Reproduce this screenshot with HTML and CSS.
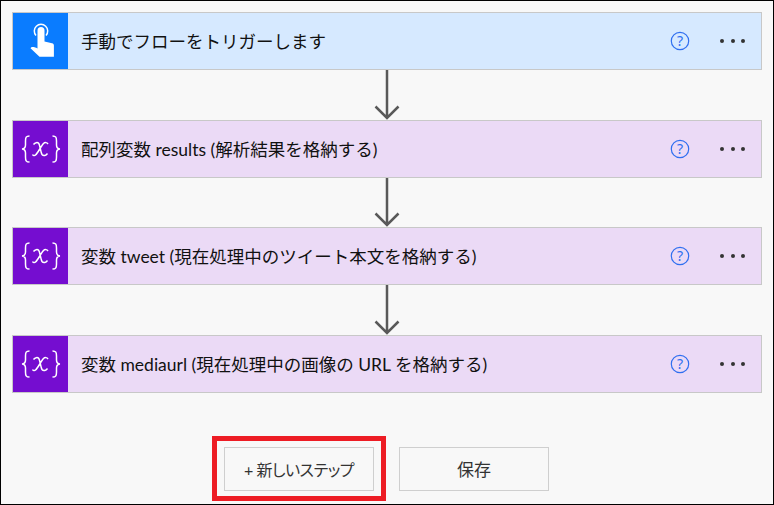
FILE: index.html
```html
<!DOCTYPE html>
<html lang="ja">
<head>
<meta charset="utf-8">
<title>フロー</title>
<link rel="stylesheet" href="styles.css">
</head>
<body>
<main class="frame">
  <section class="card card-trigger">
    <div class="tile tile-trigger">
      <svg width="28" height="36" viewBox="26.500 23 28 36"><path d="M35.500 35.500a6.700 6.700 0 1 1 10 0" fill="none" stroke="#fff" stroke-width="1.500"/><path d="M37 30.500a3.500 3.500 0 0 1 7 0V41.500L51.500 43.200c1.300.3 1.900 1.200 1.900 2.400V56.700H39L30 48.300l.8-1c1.500-.8 3.500-.4 6.200 1.100z" fill="#fff"/></svg>
    </div>
    <div class="title">手動でフローをトリガーします</div>
    <svg class="help" width="20" height="20" viewBox="0 0 20 20"><circle cx="10" cy="10" r="8.700" fill="none" stroke="#2f6ff0" stroke-width="1.200"/><text x="10" y="15" text-anchor="middle" class="help-q">?</text></svg>
    <div class="more"><i></i><i></i><i></i></div>
  </section>
  <div class="conn"><svg width="30" height="50" viewBox="0 0 30 50"><path d="M15 0V48M3.500 36.500 15 48 26.500 36.500" fill="none" stroke="#595959" stroke-width="2.500"/></svg></div>
  <section class="card card-var">
    <div class="tile tile-var"><svg width="40" height="28" viewBox="0 0 40 28"><path class="var-stroke" d="M8.500 1C5 1 4.500 2.500 4.500 6V10C4.500 12.500 3.500 13.800 1 14 3.500 14.200 4.500 15.500 4.500 18V22C4.500 25.500 5 27 8.500 27M31.500 1C35 1 35.500 2.500 35.500 6V10C35.500 12.500 36.500 13.800 39 14 36.500 14.200 35.500 15.500 35.500 18V22C35.500 25.500 35 27 31.500 27M12.500 9.500C14 7.500 16.500 7 17.800 8.500 19 10 19.500 17 21 19.500 22.500 21.500 25 20.500 26.500 18.500M27 9C26 7.500 24 7 22.500 8.500 20 11 17 18 14.500 20 13.500 21 12 20.500 11.500 19.500"/></svg></div>
    <div class="title">配列変数 results (解析結果を格納する)</div>
    <svg class="help" width="20" height="20" viewBox="0 0 20 20"><circle cx="10" cy="10" r="8.700" fill="none" stroke="#2f6ff0" stroke-width="1.200"/><text x="10" y="15" text-anchor="middle" class="help-q">?</text></svg>
    <div class="more"><i></i><i></i><i></i></div>
  </section>
  <div class="conn conn-short"><svg width="30" height="49" viewBox="0 0 30 49"><path d="M15 0V47M3.500 35.500 15 47 26.500 35.500" fill="none" stroke="#595959" stroke-width="2.500"/></svg></div>
  <section class="card card-var">
    <div class="tile tile-var"><svg width="40" height="28" viewBox="0 0 40 28"><path class="var-stroke" d="M8.500 1C5 1 4.500 2.500 4.500 6V10C4.500 12.500 3.500 13.800 1 14 3.500 14.200 4.500 15.500 4.500 18V22C4.500 25.500 5 27 8.500 27M31.500 1C35 1 35.500 2.500 35.500 6V10C35.500 12.500 36.500 13.800 39 14 36.500 14.200 35.500 15.500 35.500 18V22C35.500 25.500 35 27 31.500 27M12.500 9.500C14 7.500 16.500 7 17.800 8.500 19 10 19.500 17 21 19.500 22.500 21.500 25 20.500 26.500 18.500M27 9C26 7.500 24 7 22.500 8.500 20 11 17 18 14.500 20 13.500 21 12 20.500 11.500 19.500"/></svg></div>
    <div class="title">変数 tweet (現在処理中のツイート本文を格納する)</div>
    <svg class="help" width="20" height="20" viewBox="0 0 20 20"><circle cx="10" cy="10" r="8.700" fill="none" stroke="#2f6ff0" stroke-width="1.200"/><text x="10" y="15" text-anchor="middle" class="help-q">?</text></svg>
    <div class="more"><i></i><i></i><i></i></div>
  </section>
  <div class="conn"><svg width="30" height="50" viewBox="0 0 30 50"><path d="M15 0V48M3.500 36.500 15 48 26.500 36.500" fill="none" stroke="#595959" stroke-width="2.500"/></svg></div>
  <section class="card card-var">
    <div class="tile tile-var"><svg width="40" height="28" viewBox="0 0 40 28"><path class="var-stroke" d="M8.500 1C5 1 4.500 2.500 4.500 6V10C4.500 12.500 3.500 13.800 1 14 3.500 14.200 4.500 15.500 4.500 18V22C4.500 25.500 5 27 8.500 27M31.500 1C35 1 35.500 2.500 35.500 6V10C35.500 12.500 36.500 13.800 39 14 36.500 14.200 35.500 15.500 35.500 18V22C35.500 25.500 35 27 31.500 27M12.500 9.500C14 7.500 16.500 7 17.800 8.500 19 10 19.500 17 21 19.500 22.500 21.500 25 20.500 26.500 18.500M27 9C26 7.500 24 7 22.500 8.500 20 11 17 18 14.500 20 13.500 21 12 20.500 11.500 19.500"/></svg></div>
    <div class="title">変数 mediaurl (現在処理中の画像の URL を格納する)</div>
    <svg class="help" width="20" height="20" viewBox="0 0 20 20"><circle cx="10" cy="10" r="8.700" fill="none" stroke="#2f6ff0" stroke-width="1.200"/><text x="10" y="15" text-anchor="middle" class="help-q">?</text></svg>
    <div class="more"><i></i><i></i><i></i></div>
  </section>
  <div class="actions">
    <div class="highlight"><button class="btn btn-palt">+ 新しいステップ</button></div>
    <button class="btn">保存</button>
  </div>
</main>
</body>
</html>
```
FILE: styles.css
```css
* { box-sizing: border-box; }
html, body { margin: 0; padding: 0; }
body {
  width: 774px;
  height: 505px;
  overflow: hidden;
  background: #fff;
  font-family: "Lato", "Noto Sans CJK JP", sans-serif;
}
.frame {
  width: 774px;
  height: 505px;
  border: 1px solid #000;
  background: #f8f8f8;
  padding: 11px 11px 0 11px;
  display: flex;
  flex-direction: column;
}
.card {
  width: 750px;
  height: 58px;
  flex: none;
  display: flex;
  align-items: center;
  border: 1px solid #c8c8c8;
}
.card-trigger { background: #d6e9ff; }
.card-var { background: #ebdaf6; }
.tile {
  width: 55px;
  height: 56px;
  flex: none;
  display: flex;
  align-items: center;
  justify-content: center;
}
.tile-trigger { background: #0a7cff; }
.tile-var { background: #750dd0; }
.tile svg { display: block; }
.var-stroke { fill: none; stroke: #fff; stroke-width: 1.500; }
.title {
  flex: 1;
  margin-left: 13px;
  margin-top: 2px;
  font-size: 17.500px;
  line-height: 24px;
  color: #111;
  white-space: nowrap;
}
.help { flex: none; margin-right: 30px; }
.help-q { font-family: "Noto Sans", sans-serif; font-size: 14px; fill: #2f6ff0; }
.more { flex: none; display: flex; gap: 6.500px; margin-right: 16px; }
.more i { width: 4px; height: 4px; border-radius: 50%; background: #333; display: block; }
.conn { height: 50px; flex: none; width: 750px; display: flex; justify-content: center; }
.conn-short { height: 49px; }
.conn svg { display: block; }
.actions {
  margin-top: 43px;
  margin-left: 200px;
  display: flex;
  align-items: center;
  gap: 13px;
}
.highlight {
  width: 174px;
  height: 65px;
  border: 5px solid #ed1c24;
  padding: 6px 7px;
  flex: none;
}
.btn {
  width: 150px;
  height: 44px;
  background: transparent;
  border: 1px solid #cfcfcf;
  font-family: inherit;
  font-size: 17px;
  color: #333;
  padding: 0;
  flex: none;
}
.btn-palt { font-feature-settings: "palt"; font-size: 16px; letter-spacing: -0.450px; }
```
